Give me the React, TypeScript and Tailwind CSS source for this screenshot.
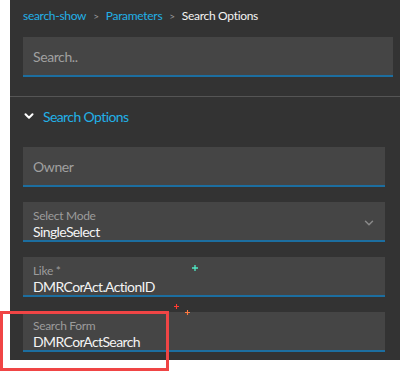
import { ChevronDown } from 'lucide-react'

const font = { fontFamily: 'Lato, "Open Sans", sans-serif' }

function Field({ label, value }: { label: string; value: string }) {
  return (
    <div className="h-[40px] bg-[#454545] border-b-2 border-[#1c6ea0] pl-[10px] pt-[7px]">
      <div className="text-[12px] leading-[14px] tracking-[-0.3px] text-[#9c9c9c]">{label}</div>
      <div className="text-[14px] leading-[17px] tracking-[-0.6px] text-[#f4f4f4]">{value}</div>
    </div>
  )
}

function Plus({ color, size, className }: { color: string; size: number; className: string }) {
  return (
    <svg width={size} height={size} viewBox="0 0 6 6" className={`absolute ${className}`}>
      <path d="M3 0V6M0 3H6" stroke={color} strokeWidth="1.3" />
    </svg>
  )
}

export default function App() {
  return (
    <div className="relative w-[400px] h-[373px] bg-white" style={font}>
      <div className="ml-[10px] w-[390px] h-[360px] bg-[#333333] flex flex-col">
        {/* Breadcrumb + search */}
        <div className="pl-[13px] pr-[7px]">
          <div className="pt-[8px] text-[12px] leading-[16px] tracking-[-0.3px] flex items-center gap-[7px]">
            <span className="text-[#22b0e6]">search-show</span>
            <span className="text-[#9a9a9a] text-[10px]">&gt;</span>
            <span className="text-[#22b0e6]">Parameters</span>
            <span className="text-[#9a9a9a] text-[10px]">&gt;</span>
            <span className="text-[#f4f4f4]">Search Options</span>
          </div>
          <div className="mt-[13px] h-[40px] bg-[#454545] border-b-2 border-[#1c6ea0] pl-[10px] flex items-center text-[14px] tracking-[-0.4px] text-[#a0a0a0]">
            Search..
          </div>
        </div>

        <div className="mt-[19px] h-px bg-[#555555]" />

        {/* Section */}
        <div className="pl-[13px] pr-[15px]">
          <div className="h-[38px] flex items-center">
            <ChevronDown size={14} strokeWidth={3.5} className="text-white ml-[-1px]" />
            <span className="ml-[7px] text-[14px] tracking-[-0.6px] text-[#22b0e6]">Search Options</span>
          </div>

          <div className="mt-[12px] flex flex-col gap-[15px]">
            <div className="h-[40px] bg-[#454545] border-b-2 border-[#1c6ea0] pl-[10px] flex items-center text-[14px] tracking-[-0.4px] text-[#a0a0a0]">
              Owner
            </div>
            <div className="relative">
              <Field label="Select Mode" value="SingleSelect" />
              <ChevronDown
                size={14}
                strokeWidth={2.5}
                className="absolute right-[9px] top-[14px] text-[#8a8a8a]"
              />
            </div>
            <Field label="Like *" value="DMRCorAct.ActionID" />
            <Field label="Search Form" value="DMRCorActSearch" />
          </div>
        </div>
      </div>

      {/* cursor artifacts */}
      <Plus color="#4fe8c4" size={6} className="left-[192px] top-[265px]" />
      <Plus color="#ff3b30" size={5} className="left-[174px] top-[304px]" />
      <Plus color="#ff7a40" size={5} className="left-[185px] top-[310px]" />

      {/* highlight box */}
      <div className="absolute left-0 top-[311px] w-[169px] h-[60px] border-[3px] border-[#f04545]" />
    </div>
  )
}
